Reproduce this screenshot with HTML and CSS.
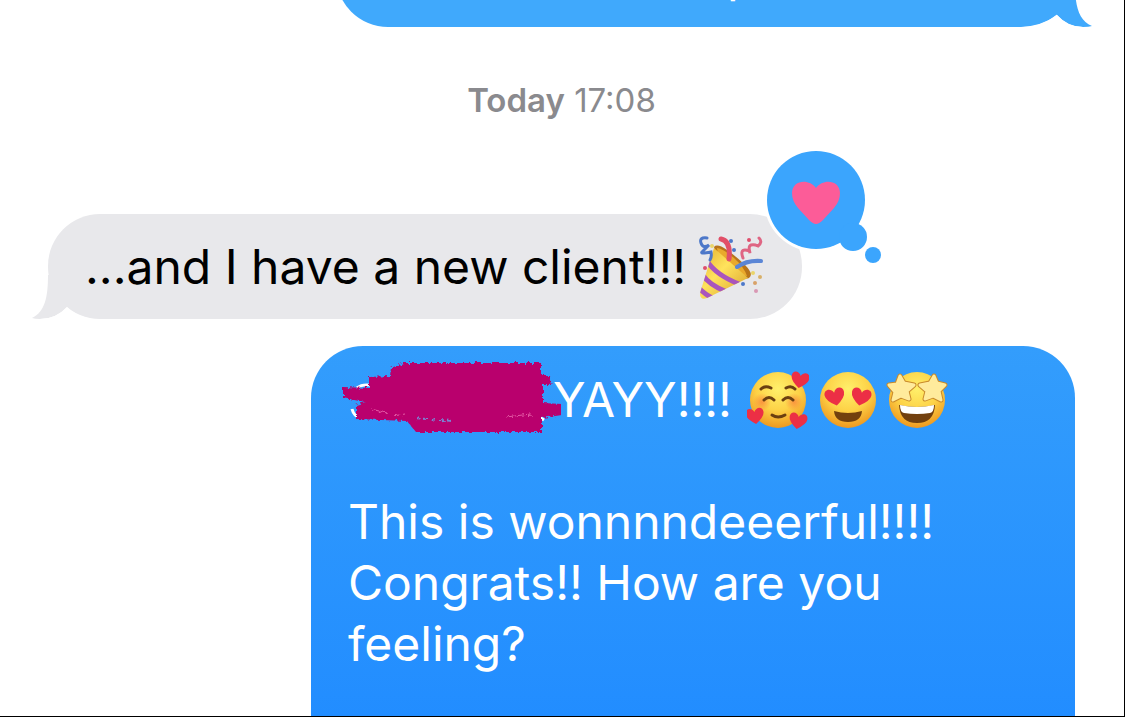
FILE: index.html
```
<!DOCTYPE html>
<html lang="en">

<head>
    <meta charset="utf-8">
    <meta name="viewport" content="width=device-width, initial-scale=1.0">
    <title>Messages</title>

    <link rel="stylesheet" href="styles.css">

</head>

<body>
    <main class="thread">

        <article class="bubble sent previous">
            <p>p</p>
            <svg class="tail" viewBox="0 0 40 44" aria-hidden="true">
                <path fill="#40a9fc" d="M0 0H22C22 22 25 37 39 43Q36 44 30 44Q15 44 4 32L0 28Z" />
                <path fill="#fff" d="M-32 44Q-11 43 4 32Q14 44 30 44V46H-32Z" />
            </svg>
        </article>

        <p class="stamp"><b>Today</b> <time>17:08</time></p>

        <article class="bubble received">
            <svg class="tail" viewBox="0 0 40 44" aria-hidden="true">
                <path fill="#e8e8eb" d="M40 0H16C16 22 13 37 0 43Q3 44 8 44Q24 44 35 32L40 28Z" />
                <path fill="#fff" d="M35 32Q24 44 8 44H60Q44 41 35 32Z" />
            </svg>
            <p>...and I have a new client!!!
                <svg class="emoji popper" viewBox="0 0 66 66" role="img" aria-label="party popper">
                    <defs>
                        <linearGradient id="gold" x1="0" y1="0" x2="1" y2="1">
                            <stop offset="0" stop-color="#d99a1c" />
                            <stop offset=".45" stop-color="#ffe35c" />
                            <stop offset="1" stop-color="#c9851a" />
                        </linearGradient>
                        <clipPath id="cone">
                            <path d="M17 13L51 43L10 63Q3 66 3 58Z" />
                        </clipPath>
                    </defs>
                    <path fill="#b8741a" d="M17 12Q20 8 30 15T48 30T53 42Q50 46 40 40T20 24Z" />
                    <path fill="#e9a92c" d="M20 13Q27 14 37 23T50 41Q44 41 32 31T20 13Z" />
                    <g clip-path="url(#cone)">
                        <path fill="url(#gold)" d="M0 0H66V66H0Z" />
                        <path stroke="#a955bd" stroke-width="5" fill="none" d="M10 26Q19 40 42 49M5 39Q12 50 30 57M1 52Q7 59 17 64" />
                    </g>
                    <g fill="none" stroke-linecap="round">
                        <path stroke="#e14f68" stroke-width="5" d="M24 4Q34 6 32 24" />
                        <path stroke="#5b86d6" stroke-width="4" d="M40 32Q50 25 64 26" />
                        <path stroke="#4d78c9" stroke-width="3" d="M10 3Q2 2 4 8T12 10Q7 15 5 17T14 17Q15 22 13 25" />
                        <path stroke="#df6583" stroke-width="3" d="M46 23Q43 15 48 15T53 18Q51 11 54 10T61 11Q66 7 62 3" />
                    </g>
                    <circle cx="34" cy="6" r="2" fill="#4d78c9" />
                    <circle cx="37" cy="15" r="2" fill="#4d78c9" />
                    <circle cx="52" cy="5" r="2" fill="#df4f6d" />
                    <circle cx="8" cy="33" r="2" fill="#df4f6d" />
                    <circle cx="15" cy="11" r="2" fill="#ead56a" />
                    <circle cx="46" cy="49" r="2" fill="#4d78c9" />
                    <circle cx="56" cy="38" r="2" fill="#ead56a" />
                    <circle cx="63" cy="42" r="2" fill="#d8b069" />
                    <circle cx="58" cy="48" r="2" fill="#d8a269" />
                    <circle cx="59" cy="56" r="2" fill="#d998b4" />
                </svg>
            </p>
            <svg class="reaction" viewBox="0 0 116 114" role="img" aria-label="Loved">
                <circle cx="50" cy="50" r="52" fill="#fff" />
                <g fill="#3ba5fd">
                    <circle cx="50" cy="50" r="49" />
                    <circle cx="87" cy="87" r="14" />
                    <circle cx="107" cy="105" r="8" />
                </g>
                <path fill="#fc5c98" d="M50 74Q47 74 43 70L32 58Q26 51 26 43C26 30 43 28 50 38C57 28 74 30 74 43Q74 51 68 58L57 70Q53 74 50 74Z" />
            </svg>
        </article>

        <article class="bubble sent">
            <p>
                <svg class="scribble" viewBox="0 0 220 76" role="img" aria-label="Name crossed out">
                    <filter id="rough" x="-5%" y="-5%" width="110%" height="110%">
                        <feTurbulence type="fractalNoise" baseFrequency=".3" numOctaves="2" seed="4" />
                        <feDisplacementMap in="SourceGraphic" scale="6" />
                    </filter>
                    <path fill="none" stroke="#fff" stroke-width="3" d="M16 27Q22 22 34 25M11 48Q13 56 20 57M70 59H110M195 54L203 59" />
                    <g filter="url(#rough)">
                        <path fill="#b9006d" d="M2 26L28 27V16L49 15L50 7L62 2H200V14H208L210 24H202V42L221 43V54L201 57V71H75L66 60L15 58V44L24 41L2 37Z" />
                        <path stroke="#7d7fd0" stroke-width="2" stroke-dasharray="5 3" fill="none" d="M74 57L112 60" />
                        <path stroke="#e45aa5" fill="none" d="M30 48L46 52M52 55L64 53M165 56L190 53" />
                    </g>
                </svg>YAYY!!!!
                <svg class="emoji" viewBox="0 0 62 62" role="img" aria-label="smiling face with hearts">
                    <defs>
                        <radialGradient id="face" cx=".5" cy=".3" r=".7">
                            <stop offset="0" stop-color="#fff06b" />
                            <stop offset=".55" stop-color="#fdd247" />
                            <stop offset="1" stop-color="#ee981f" />
                        </radialGradient>
                        <radialGradient id="blush">
                            <stop offset="0" stop-color="#f9853c" stop-opacity=".8" />
                            <stop offset="1" stop-color="#f9853c" stop-opacity="0" />
                        </radialGradient>
                        <path id="heart" d="M0 8Q-9 2 -9 -3C-9 -9 -2 -9 0 -4C2 -9 9 -9 9 -3Q9 2 0 8Z" />
                    </defs>
                    <circle cx="31" cy="31" r="28" fill="url(#face)" />
                    <circle cx="15" cy="33" r="9" fill="url(#blush)" />
                    <circle cx="47" cy="33" r="9" fill="url(#blush)" />
                    <g fill="none" stroke="#6b3f10" stroke-width="3" stroke-linecap="round">
                        <path d="M14 20Q18 16 24 19M39 19Q44 16 48 20M17 31Q22 26 27 31M36 31Q41 26 46 31" />
                        <path d="M25 46Q31 50 38 46" />
                    </g>
                    <g fill="#ec2f45">
                        <use href="#heart" transform="translate(53 11) rotate(10)" />
                        <use href="#heart" transform="translate(8 47) rotate(-8)" />
                        <use href="#heart" transform="translate(51 52) rotate(10)" />
                    </g>
                </svg>
                <svg class="emoji" viewBox="0 0 62 62" role="img" aria-label="smiling face with heart eyes">
                    <circle cx="31" cy="31" r="28" fill="url(#face)" />
                    <g fill="#ec2f45">
                        <use href="#heart" transform="translate(18 28) rotate(-12) scale(1.1)" />
                        <use href="#heart" transform="translate(44 28) rotate(12) scale(1.1)" />
                    </g>
                    <path fill="#72400e" d="M17 42Q31 46 45 42Q44 53 31 53T17 42Z" />
                </svg>
                <svg class="emoji" viewBox="0 0 62 62" role="img" aria-label="star-struck face">
                    <circle cx="31" cy="31" r="28" fill="url(#face)" />
                    <path fill="#72400e" d="M13 36Q31 40 49 36Q48 54 31 54T13 36Z" />
                    <path fill="#fff" d="M14 36Q31 40 48 36Q48 43 44 44Q31 46 18 44Q14 43 14 36Z" />
                    <g stroke="#c98a2a" stroke-width="5" stroke-linejoin="round">
                        <path d="M14 7L18 14L28 16L21 22L23 30L15 27L7 31L9 23L3 16L11 15Z" />
                        <path d="M48 7L51 14L59 16L53 22L55 31L47 27L39 30L41 22L34 16L44 14Z" />
                    </g>
                    <g fill="#ffeb9c" stroke="#ffeb9c" stroke-width="3" stroke-linejoin="round">
                        <path d="M14 7L18 14L28 16L21 22L23 30L15 27L7 31L9 23L3 16L11 15Z" />
                        <path d="M48 7L51 14L59 16L53 22L55 31L47 27L39 30L41 22L34 16L44 14Z" />
                    </g>
                </svg>
            </p>
            <p class="after-gap">This is wonnnndeeerful!!!!<br>Congrats!! How are you<br>feeling?</p>
        </article>

    </main>
</body></html>
```
FILE: styles.css
```
* {
    box-sizing: border-box;
}

body {
    margin: 0;
    background-color: white;
    font-family: Inter, "Liberation Sans", sans-serif;
}

p {
    margin: 0;
}

.thread {
    display: flex;
    flex-direction: column;
    height: 100vh;
    overflow: hidden;
    padding: 0 49px 0 48px;
    border-right: 1px solid black;
    border-bottom: 1px solid black;
}

.bubble {
    position: relative;
    flex-shrink: 0;
    padding: 22px 37px;
    border-radius: 52px;
    font-size: 48px;
    line-height: 61px;
}

.sent {
    align-self: flex-end;
    width: 74.4%;
    min-height: 480px;
    padding-top: 23px;
    background: linear-gradient(#339dfc, #228dff 370px);
    color: white;
}

/* only the lower end of this one is scrolled into view */
.previous {
    width: 72%;
    min-height: 0;
    margin-top: -78px;
    padding-top: 22px;
    padding-left: 110px;
    background: #40a9fc;
    text-align: center;
}

.received {
    align-self: flex-start;
    margin-bottom: 27px;
    background: #e8e8eb;
    color: black;
}

.stamp {
    margin: 53px 0 94px;
    color: #8a8a8e;
    font-size: 33px;
    line-height: 40px;
    text-align: center;
}

.stamp b {
    font-weight: 600;
}

.after-gap {
    margin-top: 61px;
}

.tail {
    position: absolute;
    bottom: 0;
    width: 40px;
    height: 44px;
    overflow: visible;
}

.sent .tail {
    right: -18px;
}

.received .tail {
    left: -16px;
}

.emoji {
    width: 62px;
    height: 62px;
    margin: -12px -8px -8px 2px;
    vertical-align: -6px;
}

.popper {
    width: 66px;
    height: 66px;
    margin: -12px 2px -8px -3px;
    vertical-align: -9px;
}

.reaction {
    position: absolute;
    top: -64px;
    right: -80px;
    width: 116px;
    height: 114px;
    overflow: visible;
}

.scribble {
    width: 220px;
    height: 76px;
    margin: -18px -8px -8px -7px;
    vertical-align: -12px;
}
```
